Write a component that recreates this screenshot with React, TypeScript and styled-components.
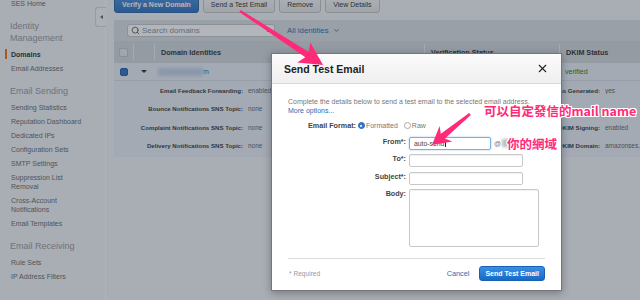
import React from 'react';
import styled, { createGlobalStyle, css } from 'styled-components';
import { Search, ChevronDown, X } from 'lucide-react';

const GlobalStyle = createGlobalStyle`
  html, body { margin: 0; padding: 0; }
  body {
    width: 640px; height: 300px; overflow: hidden;
    font-family: "Liberation Sans", Arial, sans-serif;
    background: #f2f3f5;
  }
  * { box-sizing: border-box; }
`;

const Page = styled.div`
  position: relative;
  width: 640px;
  height: 300px;
  overflow: hidden;
  background: #f2f3f5;
`;

const Layout = styled.div`
  display: flex;
  margin-top: -6px;
  height: 320px;
`;

/* ---------- sidebar ---------- */
const Sidebar = styled.nav`
  position: relative;
  width: 106px;
  flex: none;
  padding: 2px 18px 0 0;
  border-right: 1px solid #fcfcfd;
`;

const NavHeading = styled.div`
  padding-left: 10px;
  margin: 10px 0 3px;
  font-size: 9px;
  line-height: 12px;
  color: #95989c;
`;

const NavItem = styled.div<{ $active?: boolean }>`
  position: relative;
  padding: 2.5px 0 2.5px 11px;
  font-size: 7px;
  line-height: 9px;
  color: #66696d;
  ${p =>
    p.$active &&
    css`
      color: #2e3033;
      font-weight: 700;
      &::before {
        content: '';
        position: absolute;
        left: 5px;
        top: 2px;
        bottom: 2px;
        width: 2px;
        background: #ec7211;
      }
    `}
`;

const CollapseTab = styled.div`
  position: absolute;
  right: -1px;
  top: 13px;
  width: 11px;
  height: 20px;
  border: 1px solid #d4d6da;
  border-right: none;
  border-radius: 3px 0 0 3px;
  background: #f4f5f7;
  display: flex;
  align-items: center;
  justify-content: center;
  &::after {
    content: '';
    border-style: solid;
    border-width: 2.5px 3px 2.5px 0;
    border-color: transparent #666 transparent transparent;
  }
`;

/* ---------- main ---------- */
const Main = styled.main`
  flex: 1;
  min-width: 0;
  padding-left: 8px;
`;

const Toolbar = styled.div`
  display: flex;
  gap: 4px;
  padding-top: 2px;
`;

const ToolButton = styled.div<{ $primary?: boolean }>`
  height: 17px;
  padding: 0 7px;
  display: flex;
  align-items: center;
  border-radius: 3px;
  font-size: 7px;
  white-space: nowrap;
  ${p =>
    p.$primary
      ? css`
          background: linear-gradient(#4a8dd6, #2f72bf);
          border: 1px solid #2a64a8;
          color: #fff;
          font-weight: 700;
        `
      : css`
          background: linear-gradient(#f7f7f7, #e6e6e6);
          border: 1px solid #c2c4c7;
          color: #333;
        `}
`;

const Panel = styled.section`
  margin-top: 7px;
`;

const FilterBar = styled.div`
  height: 21px;
  background: #dadde1;
  display: flex;
  align-items: center;
  padding-left: 13px;
  gap: 12px;
`;

const SearchBox = styled.div`
  width: 148px;
  height: 13px;
  background: #fff;
  border: 1px solid #c4c7cb;
  border-radius: 3px;
  display: flex;
  align-items: center;
  gap: 2px;
  padding: 0 3px;
  color: #555;
`;

const Placeholder = styled.span`
  flex: 1;
  font-size: 8px;
  color: #8a8d92;
`;

const ClearMark = styled.span`
  font-size: 8px;
  color: #444;
`;

const FilterLink = styled.div`
  display: flex;
  align-items: center;
  gap: 4px;
  font-size: 7.8px;
  color: #2c6db5;
`;

const GridRow = styled.div<{ $head?: boolean }>`
  display: grid;
  grid-template-columns: 19px 21px 270px 135px 1fr;
  align-items: center;
  height: ${p => (p.$head ? 22 : 18)}px;
  background: ${p => (p.$head ? '#d3d6da' : '#e8edf5')};
  ${p => !p.$head && css`border-bottom: 1px solid #d6dce5;`}
`;

const Cell = styled.div<{ $sep?: boolean; $center?: boolean }>`
  display: flex;
  align-items: center;
  justify-content: ${p => (p.$center ? 'center' : 'flex-start')};
  padding-left: ${p => (p.$center ? 0 : 6)}px;
  height: 16px;
  white-space: nowrap;
  overflow: hidden;
  ${p => p.$sep && css`border-left: 1px solid #eceef1;`}
`;

const HeadText = styled.span`
  font-size: 7.2px;
  font-weight: 700;
  color: #333;
`;

const Checkbox = styled.span<{ $checked?: boolean }>`
  display: inline-block;
  width: ${p => (p.$checked ? 8 : 9)}px;
  height: ${p => (p.$checked ? 8 : 9)}px;
  border-radius: 2px;
  border: 1px solid ${p => (p.$checked ? '#275da0' : '#bfc2c6')};
  background: ${p => (p.$checked ? '#2f70c2' : '#e4e6e9')};
`;

const Caret = styled.span`
  border-style: solid;
  border-width: 3px 3px 0 3px;
  border-color: #333 transparent transparent transparent;
`;

const Blurred = styled.span<{ $w: number; $c: string }>`
  display: inline-block;
  width: ${p => p.$w}px;
  height: 8px;
  background: ${p => p.$c};
  filter: blur(1.5px);
`;

const DomainTail = styled.span`
  font-size: 7px;
  color: #2c6db5;
`;

const Verified = styled.span`
  font-size: 7px;
  color: #1d8102;
`;

const Details = styled.div`
  display: grid;
  grid-template-columns: 129px 190px 157px 1fr;
  grid-auto-rows: 18.5px;
  column-gap: 5px;
  align-items: center;
  background: #e8edf5;
  padding-bottom: 2px;
  white-space: nowrap;
`;

const DetailLabel = styled.span`
  text-align: right;
  font-size: 6.1px;
  font-weight: 700;
  color: #3a3a3a;
  overflow: hidden;
`;

const DetailValue = styled.span`
  font-size: 6.5px;
  color: #666;
  overflow: hidden;
`;

/* ---------- modal ---------- */
const Overlay = styled.div`
  position: absolute;
  inset: 0;
  background: rgba(35, 45, 60, 0.35);
`;

const Modal = styled.div`
  position: absolute;
  left: 271px;
  top: 53px;
  width: 291px;
  height: 238px;
  background: #fff;
  border: 1px solid #73777d;
  box-shadow: 0 2px 8px rgba(0, 0, 0, 0.3);
  display: flex;
  flex-direction: column;
`;

const ModalHeader = styled.header`
  height: 30px;
  flex: none;
  display: flex;
  align-items: center;
  justify-content: space-between;
  padding: 0 12px 0 12px;
  background: linear-gradient(#fbfbfb, #efefef);
  border-bottom: 1px solid #d9d9d9;
`;

const ModalTitle = styled.h2`
  margin: 0;
  font-size: 10.5px;
  font-weight: 700;
  color: #222;
`;

const ModalBody = styled.div`
  padding: 13px 16px 0 16px;
  display: flex;
  flex-direction: column;
`;

const Intro = styled.p`
  margin: 0;
  font-size: 7px;
  line-height: 9px;
  color: #777;
`;

const MoreLink = styled.span`
  display: block;
  color: #2a6eb7;
`;

const FormatRow = styled.div`
  margin-top: 6px;
  height: 9px;
  display: flex;
  align-items: center;
  padding-left: 20px;
  font-size: 7px;
`;

const FieldLabel = styled.label`
  font-size: 7.2px;
  font-weight: 700;
  line-height: 9px;
  color: #444;
  text-align: right;
  white-space: nowrap;
`;

const Radio = styled.span<{ $on?: boolean }>`
  width: 7px;
  height: 7px;
  border-radius: 50%;
  margin: 0 1px 0 2px;
  display: inline-flex;
  align-items: center;
  justify-content: center;
  ${p =>
    p.$on
      ? css`
          background: #2e7ed6;
          border: 1px solid #2766b3;
          &::after {
            content: '';
            width: 2px;
            height: 2px;
            border-radius: 50%;
            background: #fff;
          }
        `
      : css`
          background: #fff;
          border: 1px solid #a9a9a9;
        `}
`;

const RadioText = styled.span<{ $gap?: number }>`
  color: #777;
  margin-right: ${p => p.$gap ?? 0}px;
`;

const FormGrid = styled.div`
  margin-top: 6.5px;
  display: grid;
  grid-template-columns: 118px auto;
  column-gap: 3px;
  row-gap: 4.5px;
  align-items: start;
`;

const FieldWrap = styled.div`
  display: flex;
  align-items: center;
  gap: 3px;
`;

const Field = styled.div<{ $w: number; $h?: number; $focus?: boolean }>`
  width: ${p => p.$w}px;
  height: ${p => p.$h ?? 13}px;
  border: 1px solid ${p => (p.$focus ? '#7aaee5' : '#c8c8c8')};
  border-radius: 2px;
  box-shadow: ${p => (p.$focus ? '0 0 2px rgba(70, 140, 220, 0.55)' : 'inset 0 1px 1px rgba(0, 0, 0, 0.06)')};
  display: flex;
  align-items: center;
  padding-left: 4px;
  font-size: 6.8px;
  color: #444;
`;

const TextCaret = styled.span`
  width: 1px;
  height: 8px;
  background: #222;
  margin-left: 0.5px;
`;

const AtSign = styled.span`
  font-size: 6.8px;
  color: #777;
  display: flex;
  align-items: center;
  gap: 1px;
`;

const Divider = styled.hr`
  margin: 10.5px 0 0;
  border: none;
  border-top: 1px solid #dcdcdc;
`;

const Footer = styled.footer`
  display: flex;
  align-items: center;
  justify-content: space-between;
  padding-top: 7.5px;
`;

const Required = styled.span`
  font-size: 6.6px;
  color: #999;
  padding-left: 1px;
`;

const FooterActions = styled.div`
  display: flex;
  align-items: center;
  gap: 10px;
`;

const CancelLink = styled.span`
  font-size: 7.3px;
  color: #2a6eb7;
`;

const PrimaryButton = styled.div`
  height: 15px;
  padding: 0 5px;
  display: flex;
  align-items: center;
  border-radius: 3px;
  border: 1px solid #1a5fb1;
  background: linear-gradient(#3890e6, #1869c7);
  color: #fff;
  font-size: 7px;
  font-weight: 700;
  white-space: nowrap;
`;

/* ---------- annotations ---------- */
const Annotations = styled.svg`
  position: absolute;
  inset: 0;
  pointer-events: none;
`;

const Note = styled.div<{ $x: number; $y: number }>`
  position: absolute;
  left: ${p => p.$x}px;
  top: ${p => p.$y}px;
  font-family: "Noto Sans CJK TC", "Noto Sans CJK SC", sans-serif;
  font-weight: 700;
  font-size: 12.5px;
  line-height: 14px;
  color: #ff2a78;
  white-space: nowrap;
  text-shadow: 1px 0 0 #fff, -1px 0 0 #fff, 0 1px 0 #fff, 0 -1px 0 #fff, 1px 1px 0 #fff, -1px -1px 0 #fff,
    1px -1px 0 #fff, -1px 1px 0 #fff;
`;

function arrowPoints(x0: number, y0: number, x1: number, y1: number, headLen: number, headHalf: number) {
  const dx = x1 - x0;
  const dy = y1 - y0;
  const L = Math.hypot(dx, dy);
  const ux = dx / L;
  const uy = dy / L;
  const px = -uy;
  const py = ux;
  const bx = x1 - ux * headLen;
  const by = y1 - uy * headLen;
  const nx = bx + ux * 4;
  const ny = by + uy * 4;
  const tail = 1.2;
  const neck = 3.2;
  const pts = [
    [x0 + px * tail, y0 + py * tail],
    [nx + px * neck, ny + py * neck],
    [bx + px * headHalf, by + py * headHalf],
    [x1, y1],
    [bx - px * headHalf, by - py * headHalf],
    [nx - px * neck, ny - py * neck],
    [x0 - px * tail, y0 - py * tail],
  ];
  return pts.map(p => `${p[0].toFixed(1)},${p[1].toFixed(1)}`).join(' ');
}

const sidebarGroups: { heading?: string[]; items: string[][]; active?: number }[] = [
  { items: [['SES Home']] },
  { heading: ['Identity', 'Management'], items: [['Domains'], ['Email Addresses']], active: 0 },
  {
    heading: ['Email Sending'],
    items: [
      ['Sending Statistics'],
      ['Reputation Dashboard'],
      ['Dedicated IPs'],
      ['Configuration Sets'],
      ['SMTP Settings'],
      ['Suppression List', 'Removal'],
      ['Cross-Account', 'Notifications'],
      ['Email Templates'],
    ],
  },
  { heading: ['Email Receiving'], items: [['Rule Sets'], ['IP Address Filters']] },
];

const detailRows: [string, string, string, string][] = [
  ['Email Feedback Forwarding:', 'enabled', 'DKIM Tokens Generated:', 'yes'],
  ['Bounce Notifications SNS Topic:', 'none', '', ''],
  ['Complaint Notifications SNS Topic:', 'none', 'DKIM Signing:', 'enabled'],
  ['Delivery Notifications SNS Topic:', 'none', 'DKIM Domain:', 'amazonses.com'],
];

export default function App() {
  return (
    <Page>
      <GlobalStyle />
      <Layout>
        <Sidebar>
          {sidebarGroups.map((g, gi) => (
            <div key={gi}>
              {g.heading && (
                <NavHeading>
                  {g.heading.map((h, i) => (
                    <React.Fragment key={i}>
                      {i > 0 && <br />}
                      {h}
                    </React.Fragment>
                  ))}
                </NavHeading>
              )}
              {g.items.map((it, ii) => (
                <NavItem key={ii} $active={g.active === ii}>
                  {it.map((line, li) => (
                    <React.Fragment key={li}>
                      {li > 0 && <br />}
                      {line}
                    </React.Fragment>
                  ))}
                </NavItem>
              ))}
            </div>
          ))}
          <CollapseTab />
        </Sidebar>

        <Main>
          <Toolbar>
            <ToolButton $primary>Verify a New Domain</ToolButton>
            <ToolButton>Send a Test Email</ToolButton>
            <ToolButton>Remove</ToolButton>
            <ToolButton>View Details</ToolButton>
          </Toolbar>

          <Panel>
            <FilterBar>
              <SearchBox>
                <Search size={9} strokeWidth={2.2} />
                <Placeholder>Search domains</Placeholder>
                <ClearMark>×</ClearMark>
              </SearchBox>
              <FilterLink>
                All identities <ChevronDown size={7} strokeWidth={3} />
              </FilterLink>
            </FilterBar>

            <GridRow $head>
              <Cell $center>
                <Checkbox />
              </Cell>
              <Cell $sep />
              <Cell $sep>
                <HeadText>Domain Identities</HeadText>
              </Cell>
              <Cell $sep>
                <HeadText>Verification Status</HeadText>
              </Cell>
              <Cell $sep>
                <HeadText>DKIM Status</HeadText>
              </Cell>
            </GridRow>

            <GridRow>
              <Cell $center>
                <Checkbox $checked />
              </Cell>
              <Cell $center>
                <Caret />
              </Cell>
              <Cell style={{ paddingLeft: 4 }}>
                <Blurred $w={45} $c="#c3d2e6" />
                <DomainTail>m</DomainTail>
              </Cell>
              <Cell>
                <Verified>verified</Verified>
              </Cell>
              <Cell>
                <Verified>verified</Verified>
              </Cell>
            </GridRow>

            <Details>
              {detailRows.map((r, i) => (
                <React.Fragment key={i}>
                  <DetailLabel>{r[0]}</DetailLabel>
                  <DetailValue>{r[1]}</DetailValue>
                  <DetailLabel>{r[2]}</DetailLabel>
                  <DetailValue>{r[3]}</DetailValue>
                </React.Fragment>
              ))}
            </Details>
          </Panel>
        </Main>
      </Layout>

      <Overlay />

      <Modal>
        <ModalHeader>
          <ModalTitle>Send Test Email</ModalTitle>
          <X size={13} strokeWidth={2} color="#222" />
        </ModalHeader>
        <ModalBody>
          <Intro>
            Complete the details below to send a test email to the selected email address.
            <MoreLink>More options...</MoreLink>
          </Intro>

          <FormatRow>
            <FieldLabel>Email Format:</FieldLabel>
            <Radio $on />
            <RadioText $gap={4}>Formatted</RadioText>
            <Radio />
            <RadioText>Raw</RadioText>
          </FormatRow>

          <FormGrid>
            <FieldLabel>From*:</FieldLabel>
            <FieldWrap>
              <Field $w={82} $focus>
                auto-send
                <TextCaret />
              </Field>
              <AtSign>
                @<Blurred $w={12} $c="#b9bcc0" />
              </AtSign>
            </FieldWrap>

            <FieldLabel>To*:</FieldLabel>
            <Field $w={114} />

            <FieldLabel>Subject*:</FieldLabel>
            <Field $w={114} />

            <FieldLabel>Body:</FieldLabel>
            <Field $w={130} $h={58} />
          </FormGrid>

          <Divider />

          <Footer>
            <Required>* Required</Required>
            <FooterActions>
              <CancelLink>Cancel</CancelLink>
              <PrimaryButton>Send Test Email</PrimaryButton>
            </FooterActions>
          </Footer>
        </ModalBody>
      </Modal>

      <Annotations width={640} height={300} viewBox="0 0 640 300">
        <polygon points={arrowPoints(240, 11, 323, 65, 23, 12)} fill="#ff2a78" />
        <polygon points={arrowPoints(470, 114, 432, 145, 18, 10)} fill="#ff2a78" />
      </Annotations>

      <Note $x={484} $y={104}>可以自定發信的mail name</Note>
      <Note $x={507} $y={137}>你的網域</Note>
    </Page>
  );
}
